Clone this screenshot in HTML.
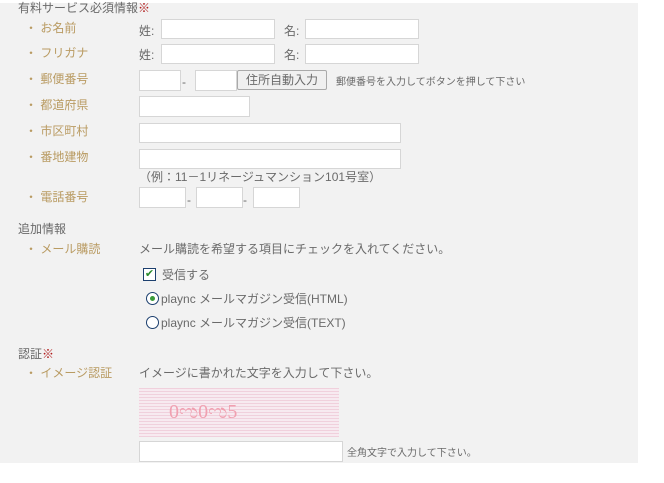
<!DOCTYPE html>
<html><head><meta charset="utf-8"><style>
body{margin:0;width:664px;height:483px;background:#fff;position:relative;overflow:hidden;font-family:"Liberation Sans","Noto Sans CJK JP",sans-serif;font-size:12px;color:#6a6a6a}
.panel{position:absolute;left:0;top:3px;width:638px;height:460px;background:#f2f2f2}
.a{position:absolute;white-space:nowrap;line-height:14px}
.l{color:#b99b62}
.i{position:absolute;background:#fff;border:1px solid #d6d6d6;box-sizing:border-box}
.r{color:#b01c1c;font-weight:bold}
</style></head><body>
<div class="panel"></div>
<div class="a" style="left:18px;top:1px">有料サービス必須情報<span class="r">※</span></div>
<div class="a l" style="left:25px;top:21px">・ お名前</div>
<div class="a l" style="left:25px;top:46px">・ フリガナ</div>
<div class="a l" style="left:25px;top:72px">・ 郵便番号</div>
<div class="a l" style="left:25px;top:98px">・ 都道府県</div>
<div class="a l" style="left:25px;top:124px">・ 市区町村</div>
<div class="a l" style="left:25px;top:150px">・ 番地建物</div>
<div class="a l" style="left:25px;top:190px">・ 電話番号</div>
<div class="a" style="left:139px;top:24px">姓:</div><div class="i" style="left:161px;top:19px;width:114px;height:20px"></div>
<div class="a" style="left:284px;top:24px">名:</div><div class="i" style="left:305px;top:19px;width:114px;height:20px"></div>
<div class="a" style="left:139px;top:48px">姓:</div><div class="i" style="left:161px;top:44px;width:114px;height:20px"></div>
<div class="a" style="left:284px;top:48px">名:</div><div class="i" style="left:305px;top:44px;width:114px;height:20px"></div>
<div class="i" style="left:139px;top:70px;width:42px;height:21px"></div><div class="a" style="left:182px;top:75px">-</div>
<div class="i" style="left:195px;top:70px;width:42px;height:21px"></div>
<div class="a" style="left:237px;top:70px;width:90px;height:20px;box-sizing:border-box;border:1px solid #aaa;background:#f0f0f0;text-align:center;line-height:18px;border-radius:2px">住所自動入力</div>
<div class="a" style="left:336px;top:76px;font-size:10px">郵便番号を入力してボタンを押して下さい</div>
<div class="i" style="left:139px;top:96px;width:111px;height:21px"></div>
<div class="i" style="left:139px;top:123px;width:262px;height:20px"></div>
<div class="i" style="left:139px;top:149px;width:262px;height:20px"></div>
<div class="a" style="left:139px;top:170px">（例：11－1リネージュマンション101号室）</div>
<div class="i" style="left:139px;top:187px;width:47px;height:21px"></div><div class="a" style="left:187px;top:193px">-</div>
<div class="i" style="left:196px;top:187px;width:47px;height:21px"></div><div class="a" style="left:243px;top:193px">-</div>
<div class="i" style="left:253px;top:187px;width:47px;height:21px"></div>
<div class="a" style="left:18px;top:222px">追加情報</div>
<div class="a l" style="left:25px;top:242px">・ メール購読</div>
<div class="a" style="left:139px;top:242px">メール購読を希望する項目にチェックを入れてください。</div>
<div class="a" style="left:143px;top:268px;width:13px;height:13px;border:1px solid #1c3f6e;background:#fff;box-sizing:border-box;color:#2a8a2a;font-size:11px;line-height:11px;text-align:center">✔</div>
<div class="a" style="left:162px;top:268px">受信する</div>
<div class="a" style="left:146px;top:292px;width:13px;height:13px;border:1px solid #1c3f6e;border-radius:50%;background:#fff;box-sizing:border-box"><div style="position:absolute;left:3px;top:3px;width:5px;height:5px;border-radius:50%;background:#3a9a3a"></div></div>
<div class="a" style="left:161px;top:292px">plaync メールマガジン受信(HTML)</div>
<div class="a" style="left:146px;top:316px;width:13px;height:13px;border:1px solid #1c3f6e;border-radius:50%;background:#fff;box-sizing:border-box"></div>
<div class="a" style="left:161px;top:316px">plaync メールマガジン受信(TEXT)</div>
<div class="a" style="left:18px;top:347px">認証<span class="r">※</span></div>
<div class="a l" style="left:25px;top:366px">・ イメージ認証</div>
<div class="a" style="left:139px;top:366px">イメージに書かれた文字を入力して下さい。</div>
<div class="a" style="left:139px;top:388px;width:200px;height:49px;background:repeating-linear-gradient(0deg,#f0d0dc 0 1px,#f7eaf0 1px 3px);color:#f0a0b0;font-size:20px;line-height:49px;padding-left:30px;box-sizing:border-box;font-family:'Liberation Serif',serif">0ಌ0ಌ5</div>
<div class="i" style="left:139px;top:441px;width:204px;height:21px"></div>
<div class="a" style="left:347px;top:447px;font-size:10px">全角文字で入力して下さい。</div>
</body></html>
